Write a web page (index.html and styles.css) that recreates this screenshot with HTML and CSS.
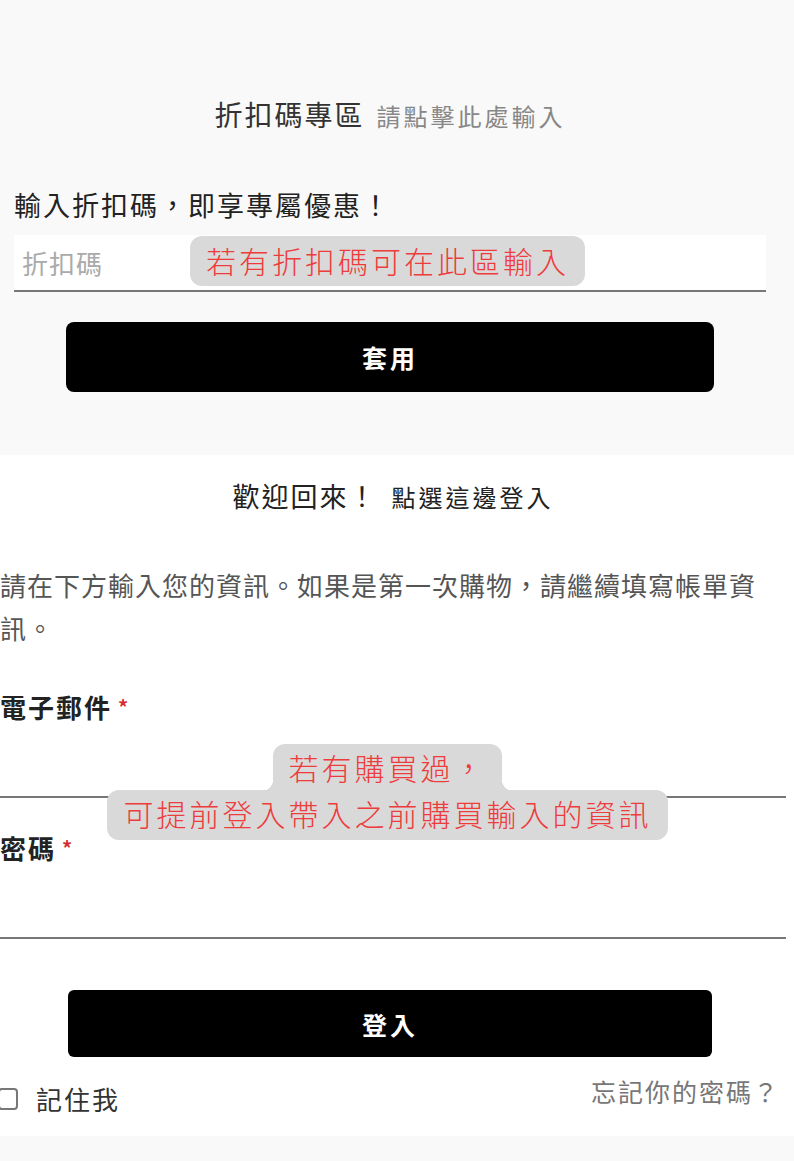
FILE: index.html
```html
<!DOCTYPE html>
<html lang="zh-Hant">
<head>
    <meta charset="UTF-8">
    <meta name="viewport" content="width=device-width, initial-scale=1.0">
    <title>結帳 - 折扣碼與登入</title>
    <link rel="stylesheet" href="styles.css">
</head>
<body>

<section class="coupon">
    <h2 class="coupon-title">折扣碼專區<span class="coupon-link">請點擊此處輸入</span></h2>
    <p class="coupon-intro">輸入折扣碼，即享專屬優惠！</p>
    <div class="coupon-field">
        <input type="text" class="coupon-input" placeholder="折扣碼">
        <span class="note note-coupon">若有折扣碼可在此區輸入</span>
    </div>
    <button class="btn btn-coupon">套用</button>
</section>

<section class="login">
    <h2 class="login-title">歡迎回來！<span class="login-link">點選這邊登入</span></h2>
    <p class="login-intro">請在下方輸入您的資訊。如果是第一次購物，請繼續填寫帳單資訊。</p>

    <label class="field-label">電子郵件<span class="req">*</span></label>
    <div class="field">
        <input type="email" class="field-input">
        <div class="note-stack">
            <span class="note note-top">若有購買過，</span>
            <span class="note note-bottom">可提前登入帶入之前購買輸入的資訊</span>
        </div>
    </div>

    <label class="field-label field-label-pw">密碼<span class="req">*</span></label>
    <div class="field">
        <input type="password" class="field-input">
    </div>

    <button class="btn btn-login">登入</button>

    <div class="login-row">
        <label class="remember"><span class="checkbox"></span>記住我</label>
        <a class="forgot">忘記你的密碼？</a>
    </div>
</section>

<footer class="page-foot"></footer>

</body>
</html>
```

FILE: styles.css
```css
body {
    margin: 0;
    padding: 0;
    font-family: "Noto Sans CJK TC", "Noto Sans", sans-serif;
    background-color: #fff;
    color: #222;
}
/* 折扣碼區塊 */
.coupon {
    background-color: #f9f9f9;
    padding: 94px 28px 63px 14px;
}
.coupon-title {
    margin: 0;
    text-align: center;
    font-size: 28px;
    font-weight: 400;
    line-height: 40px;
    letter-spacing: 2px;
    color: #333;
}
.coupon-link {
    margin-left: 12px;
    font-size: 24px;
    letter-spacing: 3px;
    color: #888;
}
.coupon-intro {
    margin: 51px 0 0;
    font-size: 27px;
    line-height: 36px;
    letter-spacing: 2px;
    color: #222;
}
.coupon-field {
    position: relative;
    margin-top: 12px;
}
.coupon-input {
    display: block;
    box-sizing: border-box;
    width: 100%;
    height: 57px;
    padding: 0 8px;
    border: none;
    border-bottom: 2px solid #777;
    background-color: #fff;
    font-family: inherit;
    font-size: 26px;
    letter-spacing: 1px;
    outline: none;
}
.coupon-input::placeholder {
    color: #aaa;
}
.btn {
    display: block;
    border: none;
    background-color: #000;
    color: #fff;
    font-family: inherit;
    font-size: 25px;
    font-weight: 700;
    letter-spacing: 3px;
    cursor: pointer;
}
.btn-coupon {
    width: 648px;
    height: 70px;
    margin: 30px 0 0 52px;
    border-radius: 8px;
}
/* 提示標籤 */
.note {
    position: absolute;
    box-sizing: border-box;
    background-color: #d9d9d9;
    color: #ee3b3b;
    font-size: 30px;
    font-weight: 300;
    letter-spacing: 3px;
    text-align: center;
    white-space: nowrap;
}
.note-coupon {
    top: 1px;
    left: 176px;
    width: 395px;
    height: 50px;
    line-height: 48px;
    border-radius: 12px;
}
.note-stack {
    position: absolute;
    top: 6px;
    left: 107px;
    width: 561px;
    height: 96px;
}
.note-top {
    top: 0;
    left: 166px;
    width: 229px;
    height: 47px;
    line-height: 46px;
    border-radius: 12px 12px 0 0;
}
.note-top::before,
.note-top::after {
    content: "";
    position: absolute;
    bottom: 0;
    width: 12px;
    height: 12px;
}
.note-top::before {
    left: -12px;
    background: radial-gradient(circle at 0 0, transparent 12px, #d9d9d9 12.5px);
}
.note-top::after {
    right: -12px;
    background: radial-gradient(circle at 100% 0, transparent 12px, #d9d9d9 12.5px);
}
.note-bottom {
    top: 46px;
    left: 0;
    width: 561px;
    height: 50px;
    line-height: 46px;
    border-radius: 12px;
}
/* 登入區塊 */
.login {
    padding: 21px 8px 15px 0;
}
.login-title {
    margin: 0;
    text-align: center;
    font-size: 27px;
    font-weight: 400;
    line-height: 40px;
    letter-spacing: 2px;
    color: #222;
}
.login-link {
    margin-left: 14px;
    font-size: 24px;
    letter-spacing: 3px;
}
.login-intro {
    margin: 46px 0 0;
    font-size: 26px;
    line-height: 43px;
    letter-spacing: 1px;
    color: #555;
}
.field-label {
    display: block;
    margin-top: 40px;
    font-size: 26px;
    font-weight: 700;
    line-height: 36px;
    letter-spacing: 2px;
    color: #222;
}
.field-label-pw {
    margin-top: 32px;
}
.req {
    margin-left: 6px;
    font-size: 20px;
    vertical-align: top;
    color: #d32f2f;
}
.field {
    position: relative;
    margin-top: 13px;
}
.field-input {
    display: block;
    box-sizing: border-box;
    width: 100%;
    height: 60px;
    border: none;
    border-bottom: 2px solid #777;
    background: transparent;
    outline: none;
}
.btn-login {
    width: 644px;
    height: 67px;
    margin: 51px 0 0 68px;
    border-radius: 6px;
}
.login-row {
    display: flex;
    justify-content: space-between;
    align-items: flex-start;
    margin-top: 24px;
    height: 40px;
}
.remember {
    display: flex;
    align-items: center;
    font-size: 26px;
    line-height: 36px;
    letter-spacing: 2px;
    color: #333;
}
.checkbox {
    box-sizing: border-box;
    width: 20px;
    height: 22px;
    margin: 0 18px 0 -2px;
    border: 2px solid #777;
    border-radius: 4px;
    background-color: #fff;
}
.forgot {
    margin: -5px 6px 0 0;
    font-size: 25px;
    line-height: 30px;
    letter-spacing: 2px;
    color: #777;
    cursor: pointer;
}
.page-foot {
    height: 30px;
    background-color: #f9f9f9;
}
```
